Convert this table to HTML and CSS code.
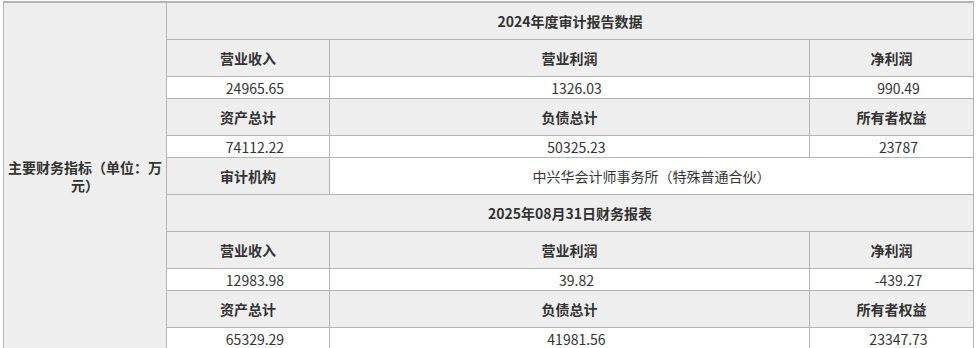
FILE: index.html
```html
<!DOCTYPE html>
<html lang="zh-CN">
<head>
<meta charset="utf-8">
<title>主要财务指标</title>
<link rel="stylesheet" href="styles.css">
</head>
<body>
<table class="fin">
  <colgroup>
    <col class="c1"><col class="c2"><col class="c3"><col class="c4">
  </colgroup>
  <tbody>
    <tr class="hd first">
      <td class="side" rowspan="11">主要财务指标（单位：万元）</td>
      <td class="title" colspan="3">2024年度审计报告数据</td>
    </tr>
    <tr class="hd"><td class="lbl">营业收入</td><td class="lbl">营业利润</td><td class="lbl">净利润</td></tr>
    <tr class="val"><td>24965.65</td><td>1326.03</td><td>990.49</td></tr>
    <tr class="hd"><td class="lbl">资产总计</td><td class="lbl">负债总计</td><td class="lbl">所有者权益</td></tr>
    <tr class="val"><td>74112.22</td><td>50325.23</td><td>23787</td></tr>
    <tr class="hd"><td class="lbl">审计机构</td><td class="org" colspan="2">中兴华会计师事务所（特殊普通合伙）</td></tr>
    <tr class="hd"><td class="title" colspan="3">2025年08月31日财务报表</td></tr>
    <tr class="hd"><td class="lbl">营业收入</td><td class="lbl">营业利润</td><td class="lbl">净利润</td></tr>
    <tr class="val"><td>12983.98</td><td>39.82</td><td>-439.27</td></tr>
    <tr class="hd"><td class="lbl">资产总计</td><td class="lbl">负债总计</td><td class="lbl">所有者权益</td></tr>
    <tr class="val"><td>65329.29</td><td>41981.56</td><td>23347.73</td></tr>
  </tbody>
</table>
</body>
</html>
```

FILE: styles.css
```css
html, body {
  margin: 0;
  padding: 0;
  background: #ffffff;
}
body {
  font-family: "Microsoft YaHei", "Noto Sans CJK SC", "Noto Sans", sans-serif;
  font-size: 14px;
  color: #333333;
}
.fin {
  margin: 1px 0 0 3px;
  width: 970px;
  table-layout: fixed;
  border-collapse: collapse;
  background: #eeeeee;
}
.c1 { width: 163px; }
.c2 { width: 163px; }
.c3 { width: 480px; }
.c4 { width: 164px; }
.fin td {
  border: 1px solid #b4b4b4;
  padding: 0;
  text-align: center;
  vertical-align: middle;
  line-height: 18px;
}
.fin tr.first td {
  border-top: 2px solid #b4b4b4;
}
.hd td { height: 36px; }
.first td.title { height: 36px; }
.val td {
  height: 21px;
  background: #ffffff;
  padding-left: 14px;
}
.side {
  font-weight: bold;
  padding: 0 2px;
}
.title, .lbl { font-weight: bold; }
.fin td.org { background: #ffffff; }
```
